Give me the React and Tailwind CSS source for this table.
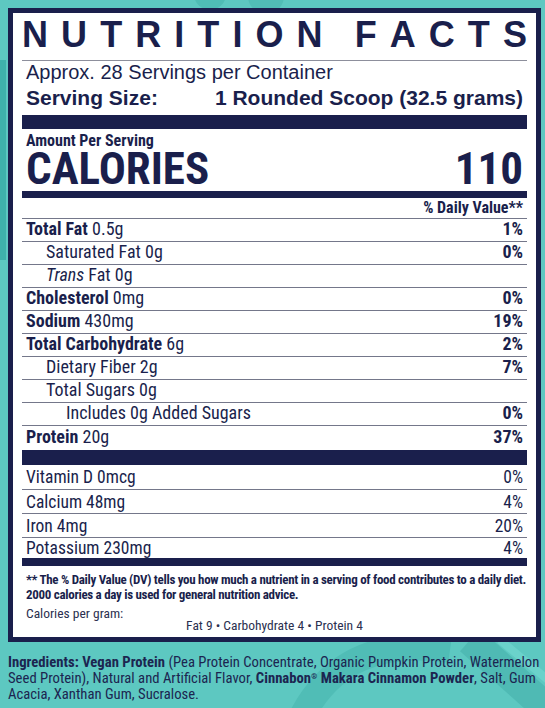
import React from 'react';

const navy = 'text-[#1a1f4c]';
const cond = "font-['Roboto_Condensed','Liberation_Sans',sans-serif]";
const arial = "font-['Liberation_Sans',Arial,sans-serif]";

const rows = [
  { label: 'Total Fat', amount: '0.5g', dv: '1%', bold: true },
  { label: 'Saturated Fat', amount: '0g', dv: '0%', indent: 1 },
  { label: 'Trans', italic: true, rest: 'Fat 0g', dv: '', indent: 1 },
  { label: 'Cholesterol', amount: '0mg', dv: '0%', bold: true },
  { label: 'Sodium', amount: '430mg', dv: '19%', bold: true },
  { label: 'Total Carbohydrate', amount: '6g', dv: '2%', bold: true },
  { label: 'Dietary Fiber', amount: '2g', dv: '7%', indent: 1 },
  { label: 'Total Sugars', amount: '0g', dv: '', indent: 1 },
  { label: 'Includes 0g Added Sugars', amount: '', dv: '0%', indent: 2 },
];

const vitamins = [
  { label: 'Vitamin D 0mcg', dv: '0%', h: 'h-[24px]', border: false },
  { label: 'Calcium 48mg', dv: '4%', h: 'h-[24px]', border: true },
  { label: 'Iron 4mg', dv: '20%', h: 'h-[24px]', border: true },
  { label: 'Potassium 230mg', dv: '4%', h: 'h-[21px]', border: true },
];

const Row = ({ r }) => {
  const pad = r.indent === 2 ? 'pl-[44px]' : r.indent === 1 ? 'pl-[24px]' : 'pl-[4px]';
  return (
    <div className={`h-[23px] border-t border-[#74778a] flex items-center justify-between pr-[4px] pb-[2px] ${pad}`}>
      <span className="text-[18px] leading-[20px]">
        {r.italic ? (
          <>
            <i>{r.label}</i> {r.rest}
          </>
        ) : r.bold ? (
          <>
            <b>{r.label}</b> {r.amount}
          </>
        ) : (
          <>
            {r.label}
            {r.amount ? ' ' + r.amount : ''}
          </>
        )}
      </span>
      <b className="text-[18px] leading-[20px]">{r.dv}</b>
    </div>
  );
};

// teal swirls peeking out around the panel
const Backdrop = () => (
  <svg className="absolute inset-0" width="545" height="708" viewBox="0 0 545 708">
    <circle cx="210" cy="-6" r="16" fill="#4fbcb5" />
    <circle cx="266" cy="-4" r="18" fill="#51bdb6" />
    <rect x="0" y="60" width="6" height="200" fill="#3fb1ab" />
    <path d="M300 720 C 330 660, 380 640, 450 650" stroke="#50bdb6" strokeWidth="26" fill="none" />
    <path d="M470 640 L 560 720" stroke="#4fbab4" strokeWidth="30" fill="none" />
    <path d="M500 640 L 560 690" stroke="#6bd2cb" strokeWidth="8" fill="none" />
  </svg>
);

export default function App() {
  const title = 'NUTRITION FACTS'.split('');
  return (
    <div className={`relative w-[545px] h-[708px] overflow-hidden bg-[#5dc8c1] ${navy}`}>
      <Backdrop />
      <div className="relative pt-[8px] pl-[8px]">
        <div className="w-[533px] h-[634px] bg-white border-[5px] border-[#1a1f4c] px-[9px] flex flex-col">
          {/* title */}
          <div className={`h-[47px] pt-[4px] flex justify-between text-[36px] leading-[36px] font-bold ${arial}`}>
            {title.map((c, i) =>
              c === ' ' ? <span key={i} className="w-[6px]" /> : <span key={i}>{c}</span>
            )}
          </div>
          <div className="h-px bg-[#8d8f9c]" />
          <div className={`pl-[4px] text-[20px] leading-[22px] ${arial}`}>Approx. 28 Servings per Container</div>
          <div className={`mt-[4px] pl-[4px] pr-[4px] flex justify-between text-[21px] leading-[22px] font-bold ${arial}`}>
            <span>Serving Size:</span>
            <span>1 Rounded Scoop (32.5 grams)</span>
          </div>
          <div className="mt-[6px] h-[14px] bg-[#1a1f4c]" />
          <div className={`mt-[4px] pl-[4px] text-[16px] leading-[16px] font-bold ${cond}`}>Amount Per Serving</div>
          <div className={`h-[40px] px-[4px] flex justify-between items-center text-[45px] leading-[40px] font-bold ${cond}`}>
            <span>CALORIES</span>
            <span>110</span>
          </div>
          <div className="mt-[2px] h-[7px] bg-[#1a1f4c]" />
          <div className={`h-[20px] pr-[4px] text-right text-[16px] leading-[20px] font-bold ${cond}`}>% Daily Value**</div>

          <div className={cond}>
            {rows.map((r, i) => (
              <Row key={i} r={r} />
            ))}
            <div className="h-[25px] border-t border-[#74778a] flex items-center justify-between px-[4px] pb-[2px]">
              <span className="text-[18px] leading-[20px]">
                <b>Protein</b> 20g
              </span>
              <b className="text-[18px] leading-[20px]">37%</b>
            </div>
            <div className="h-[15px] bg-[#1a1f4c]" />
            {vitamins.map((v, i) => (
              <div
                key={i}
                className={`${v.h} ${v.border ? 'border-t border-[#74778a]' : ''} flex items-center justify-between px-[4px] text-[17.5px] leading-[20px]`}
              >
                <span>{v.label}</span>
                <span>{v.dv}</span>
              </div>
            ))}
            <div className="h-[8px] bg-[#1a1f4c]" />
            <div className="mt-[6px] pl-[4px] text-[13px] leading-[15px] font-bold tracking-[-0.3px] whitespace-nowrap">
              <div>** The % Daily Value (DV) tells you how much a nutrient in a serving of food contributes to a daily diet.</div>
              <div>2000 calories a day is used for general nutrition advice.</div>
            </div>
            <div className="mt-[5px] pl-[4px] text-[13.5px] leading-[12px] text-[#2b3050]">Calories per gram:</div>
            <div className="text-center text-[13.5px] leading-[12px] text-[#2b3050]">Fat 9 • Carbohydrate 4 • Protein 4</div>
          </div>
        </div>
        <div className={`mt-[12px] text-[14.7px] leading-[16px] text-[#1c2550] whitespace-nowrap ${cond}`}>
          <div>
            <b>Ingredients: Vegan Protein</b> (Pea Protein Concentrate, Organic Pumpkin Protein, Watermelon
          </div>
          <div>
            Seed Protein), Natural and Artificial Flavor, <b>Cinnabon<sup className="text-[8px]">®</sup> Makara Cinnamon Powder</b>, Salt, Gum
          </div>
          <div>Acacia, Xanthan Gum, Sucralose.</div>
        </div>
      </div>
    </div>
  );
}
